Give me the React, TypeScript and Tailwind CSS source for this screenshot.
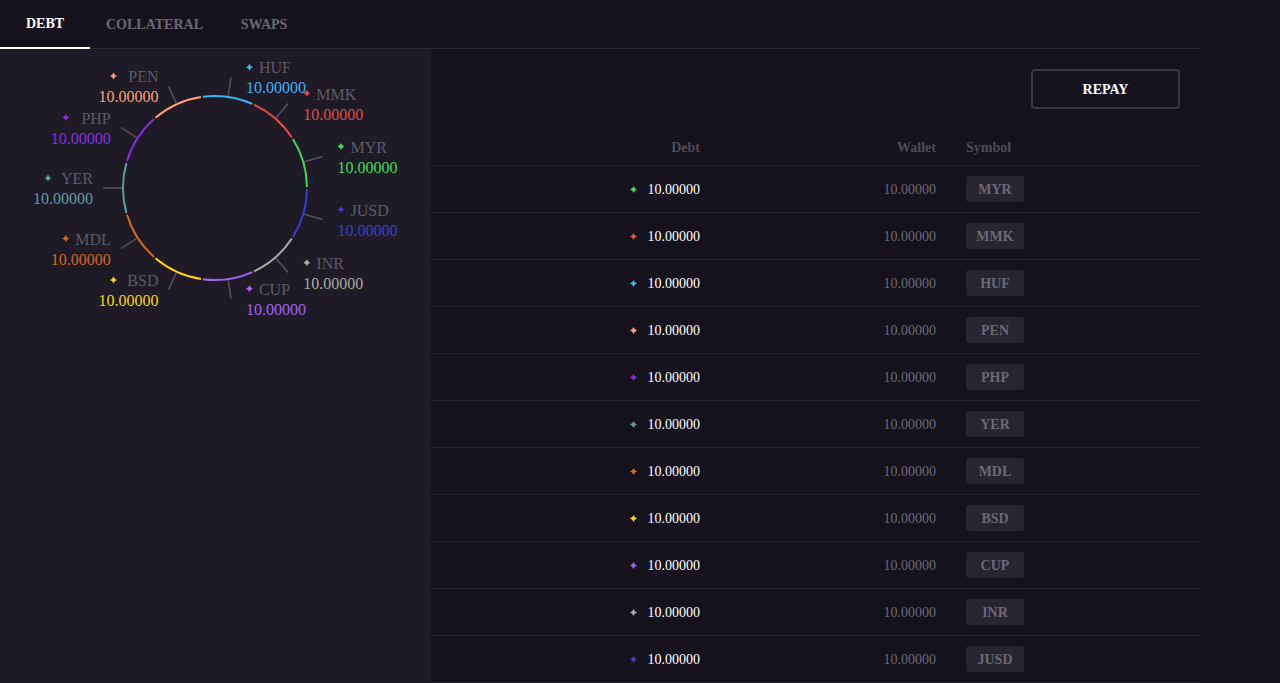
import React from "react";

type Coin = { symbol: string; color: string };

// clockwise order on the ring, starting at the top
const ring: Coin[] = [
  { symbol: "HUF", color: "#3ab4f2" },
  { symbol: "MMK", color: "#e44a4a" },
  { symbol: "MYR", color: "#3ddc57" },
  { symbol: "JUSD", color: "#3c3bd2" },
  { symbol: "INR", color: "#a7ada5" },
  { symbol: "CUP", color: "#a463f2" },
  { symbol: "BSD", color: "#ffd60a" },
  { symbol: "MDL", color: "#d2691e" },
  { symbol: "YER", color: "#5f9ea0" },
  { symbol: "PHP", color: "#8a2be2" },
  { symbol: "PEN", color: "#ffa07a" },
];

const tableOrder = ["MYR", "MMK", "HUF", "PEN", "PHP", "YER", "MDL", "BSD", "CUP", "INR", "JUSD"];

const colorOf = (s: string) => ring.find((c) => c.symbol === s)?.color ?? "#fff";

const CX = 215;
const CY = 188;
const R = 92;
const SPARK = "M3.5 0 Q4.4 2.6 7 3.5 Q4.4 4.4 3.5 7 Q2.6 4.4 0 3.5 Q2.6 2.6 3.5 0Z";

const pt = (deg: number, r: number) => {
  const a = (deg * Math.PI) / 180;
  return { x: CX + r * Math.sin(a), y: CY - r * Math.cos(a) };
};

function Spark({ color }: { color: string }) {
  return (
    <svg width={7} height={7} viewBox="0 0 7 7" className="shrink-0">
      <path d={SPARK} fill={color} />
    </svg>
  );
}

function RingChart() {
  const step = 360 / ring.length;
  const start = -step / 4;
  return (
    <svg width={431} height={300} viewBox="0 49 431 300" className="block">
      {ring.map((c, i) => {
        const a0 = start + i * step + 0.6;
        const a1 = start + (i + 1) * step - 0.6;
        const p0 = pt(a0, R);
        const p1 = pt(a1, R);
        const mid = start + i * step + step / 2;
        const t0 = pt(mid, R + 1);
        const t1 = pt(mid, R + 20);
        const right = mid < 180;
        const nameY = t1.y - 3.8;
        const valY = t1.y + 16.2;
        const iconX = right ? t1.x + 15 : t1.x - 58.5;
        return (
          <g key={c.symbol}>
            <path
              d={`M${p0.x} ${p0.y} A${R} ${R} 0 0 1 ${p1.x} ${p1.y}`}
              stroke={c.color}
              strokeWidth={2}
              fill="none"
            />
            <line x1={t0.x} y1={t0.y} x2={t1.x} y2={t1.y} stroke="#55525e" strokeWidth={1.5} />
            <path transform={`translate(${iconX} ${t1.y - 13.5})`} d={SPARK} fill={c.color} />
            <text
              x={right ? t1.x + 28 : t1.x - 10}
              y={nameY}
              textAnchor={right ? "start" : "end"}
              fontSize={16}
              fill="#5d5a68"
              fontFamily="'Liberation Serif', serif"
            >
              {c.symbol}
            </text>
            <text
              x={right ? t1.x + 15 : t1.x - 10}
              y={valY}
              textAnchor={right ? "start" : "end"}
              fontSize={16}
              fill={c.color}
              fontFamily="'Liberation Serif', serif"
            >
              10.00000
            </text>
          </g>
        );
      })}
    </svg>
  );
}

export default function App() {
  const tabs = ["DEBT", "COLLATERAL", "SWAPS"];
  return (
    <div className="min-h-screen bg-[#15121d] font-['Liberation_Serif',serif]">
      <div className="w-[1200px]">
        <div className="flex h-[49px] border-b border-[#2a2833]">
          {tabs.map((t, i) => (
            <div
              key={t}
              className={
                i === 0
                  ? "flex min-w-[90px] items-center justify-center border-b-2 border-white px-4 -mb-px text-[14px] font-bold text-white"
                  : "flex min-w-[90px] items-center justify-center px-4 text-[14px] font-bold text-[#6c6977]"
              }
            >
              {t}
            </div>
          ))}
        </div>

        <div className="flex">
          <div className="w-[431px] shrink-0 bg-[#1e1b26]">
            <RingChart />
          </div>

          <div className="flex-1">
            <div className="flex justify-end pt-5 pr-5">
              <button className="flex h-[40px] w-[149px] items-center justify-center rounded-[4px] border-2 border-[#3a3744] text-[14px] font-bold text-white">
                REPAY
              </button>
            </div>

            <div className="mt-5 grid h-[37px] grid-cols-[284px_236px_1fr] items-center border-b border-[#24222d] text-[14px] font-bold text-[#4f4c59]">
              <div className="pr-[15px] text-right">Debt</div>
              <div className="pr-[15px] text-right">Wallet</div>
              <div className="pl-[15px]">Symbol</div>
            </div>

            {tableOrder.map((s) => (
              <div
                key={s}
                className="grid h-[47px] grid-cols-[284px_236px_1fr] items-center border-b border-[#24222d] text-[14px]"
              >
                <div className="flex items-center justify-end gap-[11px] pr-[15px] text-white">
                  <Spark color={colorOf(s)} />
                  <span>10.00000</span>
                </div>
                <div className="pr-[15px] text-right text-[#6d6a76]">10.00000</div>
                <div className="pl-[15px]">
                  <span className="flex h-[26px] w-[58px] items-center justify-center rounded-[3px] bg-[#27252f] font-bold text-[#6c6977]">
                    {s}
                  </span>
                </div>
              </div>
            ))}
          </div>
        </div>
      </div>
    </div>
  );
}
